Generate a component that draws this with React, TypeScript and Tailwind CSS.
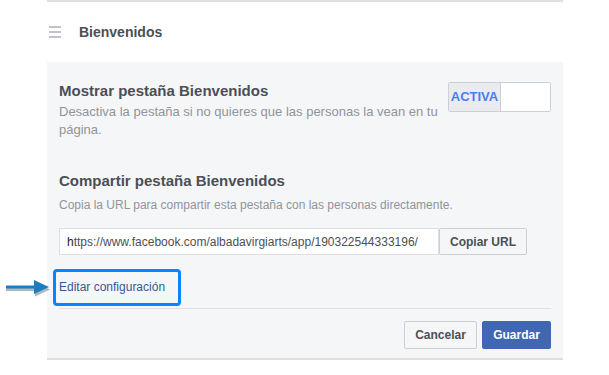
import React from 'react';

const url = 'https://www.facebook.com/albadavirgiarts/app/190322544333196/';

const App: React.FC = () => {
    return (
        <div className="relative w-[609px] h-[375px] bg-white font-['Liberation_Sans',Arial,sans-serif] overflow-hidden">
            {/* Annotation arrow */}
            <svg className="absolute left-[4px] top-[278px]" width="48" height="20" viewBox="0 0 48 20">
                <path d="M2 8.5 H31 V3 L46 10 L31 17 V11.5 H2 Z" fill="#0b3552" opacity="0.35" transform="translate(0 1.5)" />
                <path d="M2 7.5 H30 V2 L45 9 L30 16 V10.5 H2 Z" fill="#1a7cc1" />
            </svg>

            <div className="ml-[47px] w-[516px] border-t-2 border-[#dddfe2]">
                {/* Header */}
                <div className="h-[60px] flex items-center">
                    <div className="ml-[2px] w-[12px] flex flex-col gap-[3px]">
                        <span className="h-[2px] bg-[#bec2c9]" />
                        <span className="h-[2px] bg-[#bec2c9]" />
                        <span className="h-[2px] bg-[#bec2c9]" />
                    </div>
                    <h2 className="ml-[18px] text-[14px] font-bold text-[#4b4f56]">Bienvenidos</h2>
                </div>

                {/* Panel */}
                <div className="h-[298px] bg-[#f5f6f7] border-b-2 border-[#dddfe2] px-3 pt-5">
                    <div className="flex justify-between">
                        <div className="w-[384px]">
                            <h3 className="text-[15px] leading-[18px] font-bold text-[#4b4f56]">Mostrar pestaña Bienvenidos</h3>
                            <p className="mt-[3px] text-[13px] leading-[18px] text-[#90949c]">
                                Desactiva la pestaña si no quieres que las personas la vean en tu página.
                            </p>
                        </div>
                        <div className="flex h-[30px] w-[103px] border border-[#ccd0d5] rounded-[2px] overflow-hidden">
                            <div className="w-[51px] bg-[#e9ebee] flex items-center justify-center text-[13px] font-bold text-[#4a7cf7]">
                                ACTIVA
                            </div>
                            <div className="flex-1 bg-white border-l border-[#ccd0d5]" />
                        </div>
                    </div>

                    <h3 className="mt-[33px] text-[15px] leading-[18px] font-bold text-[#4b4f56]">Compartir pestaña Bienvenidos</h3>
                    <p className="mt-[6px] text-[12px] leading-[18px] text-[#90949c]">
                        Copia la URL para compartir esta pestaña con las personas directamente.
                    </p>

                    <div className="mt-[14px] flex h-[27px]">
                        <div className="w-[380px] bg-white border border-[#dddfe2] flex items-center px-[7px] text-[12px] text-[#4b4f56] whitespace-nowrap overflow-hidden">
                            <span className="text-[#1d2129]">h</span>{url.slice(1)}
                        </div>
                        <button className="w-[88px] bg-[#f5f6f7] border border-[#ccd0d5] rounded-[2px] text-[12px] font-bold text-[#4b4f56]">
                            Copiar URL
                        </button>
                    </div>

                    <div className="relative mt-[23px] h-[18px] flex items-center">
                        <span className="text-[12px] text-[#365899]">Editar configuración</span>
                        <div className="absolute left-[-6px] top-[-9px] w-[128px] h-[37px] border-[3px] border-[#0a84ff] rounded-[4px]" />
                    </div>

                    <div className="mt-[12px] border-t border-[#dddfe2]" />

                    <div className="mt-[12px] flex justify-end gap-[5px]">
                        <button className="w-[73px] h-[28px] bg-[#f5f6f7] border border-[#ccd0d5] rounded-[2px] text-[12px] font-bold text-[#4b4f56]">
                            Cancelar
                        </button>
                        <button className="w-[69px] h-[28px] bg-[#4267b2] border border-[#4267b2] rounded-[2px] text-[12px] font-bold text-white">
                            Guardar
                        </button>
                    </div>
                </div>
            </div>
        </div>
    );
};

export default App;
